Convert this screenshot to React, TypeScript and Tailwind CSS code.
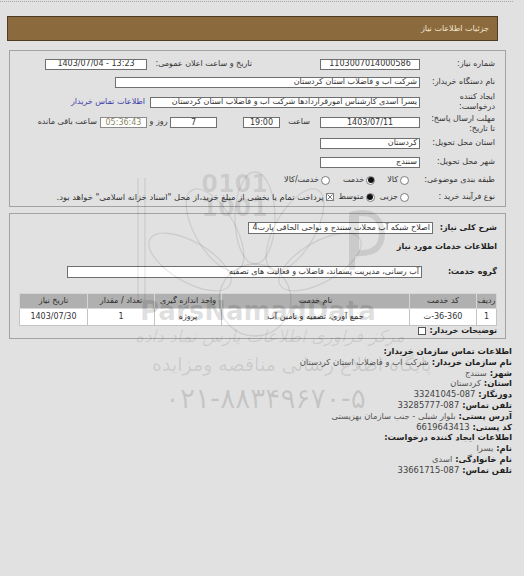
import React from "react";

function Box({ className = "", children }: { className?: string; children?: React.ReactNode }) {
  return (
    <div
      className={
        "h-[11px] shrink-0 bg-white border border-[#6f6f6f] flex items-center overflow-hidden whitespace-nowrap leading-none " +
        className
      }
    >
      {children}
    </div>
  );
}

function Radio({ checked = false }: { checked?: boolean }) {
  return (
    <span className="w-[9px] h-[9px] shrink-0 rounded-full border border-[#7d7d7d] bg-white flex items-center justify-center">
      {checked && <span className="w-[6px] h-[6px] rounded-full bg-[#111]" />}
    </span>
  );
}

function CheckX() {
  return (
    <svg width="8" height="8" viewBox="0 0 8 8" className="shrink-0">
      <rect x="0.5" y="0.5" width="7" height="7" fill="#fff" stroke="#7d7d7d" />
      <path d="M1.5 1.5 L6.5 6.5 M6.5 1.5 L1.5 6.5" stroke="#6a6a6a" strokeWidth="0.9" />
    </svg>
  );
}

function WatermarkArt() {
  return (
    <svg
      className="absolute left-0 top-0 pointer-events-none"
      width="524"
      height="576"
      viewBox="0 0 524 576"
    >
      <g fill="none" stroke="rgba(0,0,0,0.09)" strokeWidth="1.3">
        <line x1="138" y1="178" x2="138" y2="300" />
        <line x1="145" y1="178" x2="145" y2="300" />
        <circle cx="255" cy="300" r="36" />
        <ellipse cx="190" cy="262" rx="20" ry="46" transform="rotate(-60 190 262)" />
        <ellipse cx="215" cy="230" rx="20" ry="46" transform="rotate(-30 215 230)" />
        <ellipse cx="255" cy="218" rx="20" ry="46" />
        <ellipse cx="295" cy="230" rx="20" ry="46" transform="rotate(30 295 230)" />
        <ellipse cx="320" cy="262" rx="20" ry="46" transform="rotate(60 320 262)" />
      </g>
      <g fill="rgba(0,0,0,0.09)" fontFamily="DejaVu Sans" fontWeight="bold" fontSize="24">
        <text x="268" y="192">0101</text>
        <text x="268" y="216">1001</text>
      </g>
      <path
        d="M350 215 q30 -8 32 18 q0 22 -26 20 l0 -38 M352 215 l0 55"
        stroke="rgba(0,0,0,0.1)"
        strokeWidth="6"
        fill="none"
      />
    </svg>
  );
}

export default function App() {
  return (
    <div
      dir="rtl"
      className="relative w-[524px] h-[576px] overflow-hidden bg-[#e1e1e1] text-[8px] text-[#333] font-['DejaVu_Sans',sans-serif]"
    >
      {/* top dotted rule */}
      <div className="mt-[1px] mr-[11px] w-[513px] h-0 border-t border-dotted border-[#a8a8a8]" />

      {/* header bar */}
      <div className="relative mt-[14px] mr-[26px] w-[491px] h-[25px] bg-[#8b6a3d] border border-[#4d3b22] flex items-center pr-[8px] text-[#f1e7cf]">
        جزئیات اطلاعات نیاز
      </div>

      {/* panel 1 */}
      <div className="relative mt-[9px] mr-[18px] w-[497px] h-[157px] border border-[#a3a3a3] pr-[10px] flex flex-col">
        <div className="flex items-center h-[12px] mt-[7px]">
          <div className="w-[75px] shrink-0">شماره نیاز:</div>
          <Box className="w-[100px] justify-center">
            <span dir="ltr">1103007014000586</span>
          </Box>
          <div className="w-[173px] shrink-0 pr-[68px] whitespace-nowrap">تاریخ و ساعت اعلان عمومی:</div>
          <Box className="w-[102px] justify-center">
            <span dir="ltr">1403/07/04 - 13:23</span>
          </Box>
        </div>

        <div className="flex items-center h-[12px] mt-[6px]">
          <div className="w-[75px] shrink-0">نام دستگاه خریدار:</div>
          <Box className="w-[305px] pr-[2px]">شرکت اب و فاضلاب استان کردستان</Box>
        </div>

        <div className="flex items-center h-[20px] mt-[4px]">
          <div className="w-[75px] shrink-0 leading-[10px]">
            ایجاد کننده
            <br />
            درخواست:
          </div>
          <Box className="w-[270px] h-[10px] pr-[2px]">
            یسرا اسدی کارشناس امورقراردادها شرکت اب و فاضلاب استان کردستان
          </Box>
          <span className="mr-[5px] text-[#3b3ba8] whitespace-nowrap">اطلاعات تماس خریدار</span>
        </div>

        <div className="flex items-start h-[20px] mt-[1px]">
          <div className="w-[75px] shrink-0 leading-[9.5px] pt-[1px]">
            مهلت ارسال پاسخ:
            <br />
            تا تاریخ:
          </div>
          <Box className="w-[100px] mt-[4px] justify-center">
            <span dir="ltr">1403/07/11</span>
          </Box>
          <div className="w-[40px] shrink-0 pr-[10px] mt-[5px] leading-none">ساعت</div>
          <Box className="w-[37px] mt-[4px] justify-center">
            <span dir="ltr">19:00</span>
          </Box>
          <div className="w-[26px] shrink-0" />
          <Box className="w-[47px] mt-[4px] justify-center">7</Box>
          <div className="w-[23px] shrink-0 mt-[5px] leading-none text-center">روز و</div>
          <Box className="w-[47px] mt-[4px] justify-center bg-[#f6f4e6] text-[#8c8a64] border-[#8a8a8a]">
            <span dir="ltr">05:36:43</span>
          </Box>
          <div className="pr-[3px] mt-[5px] leading-none whitespace-nowrap">ساعت باقی مانده</div>
        </div>

        <div className="flex items-center h-[12px] mt-[4px]">
          <div className="w-[75px] shrink-0">استان محل تحویل:</div>
          <Box className="w-[100px] pr-[2px]">کردستان</Box>
        </div>

        <div className="flex items-center h-[12px] mt-[7px]">
          <div className="w-[75px] shrink-0">شهر محل تحویل:</div>
          <Box className="w-[100px] pr-[2px]">سنندج</Box>
        </div>

        <div className="flex items-center h-[12px] mt-[6px] whitespace-nowrap">
          <div className="w-[86px] shrink-0">طبقه بندی موضوعی:</div>
          <Radio />
          <span className="mr-[2px]">کالا</span>
          <span className="mr-[12px]">
            <Radio checked />
          </span>
          <span className="mr-[2px]">خدمت</span>
          <span className="mr-[13px]">
            <Radio />
          </span>
          <span className="mr-[2px]">خدمت/کالا</span>
        </div>

        <div className="flex items-center h-[12px] mt-[5px] whitespace-nowrap">
          <div className="w-[86px] shrink-0">نوع فرآیند خرید :</div>
          <Radio />
          <span className="mr-[2px]">جزیی</span>
          <span className="mr-[5px]">
            <Radio checked />
          </span>
          <span className="mr-[2px]">متوسط</span>
          <span className="mr-[5px] flex">
            <CheckX />
          </span>
          <span className="mr-[2px] text-[8.4px]">
            پرداخت تمام یا بخشی از مبلغ خرید،از محل "اسناد خزانه اسلامی" خواهد بود.
          </span>
        </div>
      </div>

      {/* panel 2 */}
      <div className="relative mt-[6px] mr-[18px] w-[497px] h-[126px] border border-[#a3a3a3] pr-[8px] flex flex-col">
        <div className="flex items-center h-[13px] mt-[7px]">
          <div className="w-[64px] shrink-0 font-bold text-[#222]">شرح کلی نیاز:</div>
          <Box className="w-[185px] h-[12px] pr-[2px]">اصلاح شبکه آب محلات سنندج و نواحی الحاقی پارت4</Box>
        </div>

        <div className="flex items-center h-[12px] mt-[7px] font-bold text-[#222]">اطلاعات خدمات مورد نیاز</div>

        <div className="flex items-center h-[13px] mt-[12px]">
          <div className="w-[75px] shrink-0 font-bold text-[#222]">گروه خدمت:</div>
          <Box className="w-[355px] h-[12px] pr-[2px]">آب رسانی، مدیریت پسماند، فاضلاب و فعالیت های تصفیه</Box>
        </div>

        <table className="mt-[15px] w-[477px] border-collapse table-fixed text-[#333]">
          <thead>
            <tr className="h-[15px] bg-[#b0b0b0] text-[#2a2a2a]">
              <th className="w-[20px] font-normal border border-[#d6d6d6] p-0">ردیف</th>
              <th className="w-[67px] font-normal border border-[#d6d6d6] p-0">کد خدمت</th>
              <th className="w-[188px] font-normal border border-[#d6d6d6] p-0">نام خدمت</th>
              <th className="w-[67px] font-normal border border-[#d6d6d6] p-0">واحد اندازه گیری</th>
              <th className="w-[67px] font-normal border border-[#d6d6d6] p-0">تعداد / مقدار</th>
              <th className="w-[68px] font-normal border border-[#d6d6d6] p-0">تاریخ نیاز</th>
            </tr>
          </thead>
          <tbody>
            <tr className="h-[17px] bg-white">
              <td className="border border-[#c4c4c4] text-center p-0">1</td>
              <td className="border border-[#c4c4c4] text-center p-0">
                <bdo dir="ltr">ث-36-360</bdo>
              </td>
              <td className="border border-[#c4c4c4] text-center p-0">جمع آوری، تصفیه و تامین آب</td>
              <td className="border border-[#c4c4c4] text-center p-0">پروژه</td>
              <td className="border border-[#c4c4c4] text-center p-0">1</td>
              <td className="border border-[#c4c4c4] text-center p-0">
                <span dir="ltr">1403/07/30</span>
              </td>
            </tr>
          </tbody>
        </table>

        <div className="flex items-center h-[10px] font-bold text-[#222]">
          توضیحات خریدار:
          <span className="mr-[3px] w-[8px] h-[8px] bg-white border border-[#555]" />
        </div>
      </div>

      {/* contact block */}
      <div className="relative mt-[7px] mr-[12px] leading-[10.8px] text-[8.4px] text-[#444]">
        <div className="font-bold text-[#1f1f1f]">اطلاعات تماس سازمان خریدار:</div>
        <div>
          <span className="font-bold text-[#1f1f1f]">نام سازمان خریدار: </span>
          <span className="text-[#555]">شرکت اب و فاضلاب استان کردستان</span>
        </div>
        <div>
          <span className="font-bold text-[#1f1f1f]">شهر: </span>
          <span className="text-[#555]">سنندج</span>
        </div>
        <div>
          <span className="font-bold text-[#1f1f1f]">استان: </span>
          <span className="text-[#555]">کردستان</span>
        </div>
        <div>
          <span className="font-bold text-[#1f1f1f]">دورنگار: </span>
          <span dir="ltr">33241045-087</span>
        </div>
        <div>
          <span className="font-bold text-[#1f1f1f]">تلفن تماس: </span>
          <span dir="ltr">33285777-087</span>
        </div>
        <div>
          <span className="font-bold text-[#1f1f1f]">آدرس پستی: </span>
          <span className="text-[#555]">بلوار شبلی - جنب سازمان بهزیستی</span>
        </div>
        <div>
          <span className="font-bold text-[#1f1f1f]">کد پستی: </span>
          <span dir="ltr">6619643413</span>
        </div>
        <div className="font-bold text-[#1f1f1f]">اطلاعات ایجاد کننده درخواست:</div>
        <div>
          <span className="font-bold text-[#1f1f1f]">نام: </span>
          <span className="text-[#555]">یسرا</span>
        </div>
        <div>
          <span className="font-bold text-[#1f1f1f]">نام خانوادگی: </span>
          <span className="text-[#555]">اسدی</span>
        </div>
        <div>
          <span className="font-bold text-[#1f1f1f]">تلفن تماس: </span>
          <span dir="ltr">33661715-087</span>
        </div>
      </div>

      {/* watermark overlay (translucent, over content like the reference) */}
      <WatermarkArt />
      <div
        dir="ltr"
        className="absolute left-[140px] top-[292px] text-[26px] font-bold text-black/[0.13] pointer-events-none whitespace-nowrap"
      >
        ParsNamadData
      </div>
      <div className="absolute left-[135px] top-[324px] text-[17px] italic text-black/[0.09] pointer-events-none whitespace-nowrap">
        مرکز فراوری اطلاعات پارس نماد داده
      </div>
      <div className="absolute left-[152px] top-[350px] text-[19px] text-black/[0.1] pointer-events-none whitespace-nowrap">
        پایگاه اطلاع رسانی مناقصه ومزایده
      </div>
      <div
        dir="ltr"
        className="absolute left-[165px] top-[378px] text-[28px] text-black/[0.12] pointer-events-none whitespace-nowrap"
      >
        ۰۲۱-۸۸۳۴۹۶۷۰-۵
      </div>
    </div>
  );
}
